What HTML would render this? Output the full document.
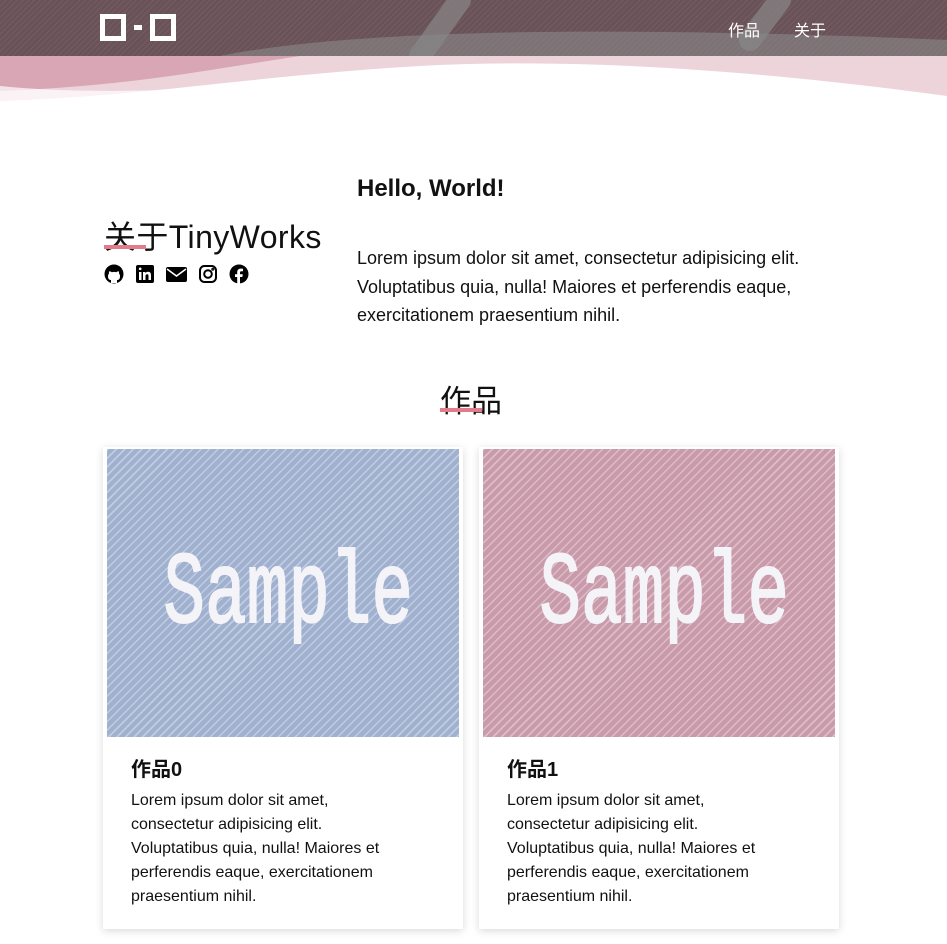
<!DOCTYPE html>
<html><head><meta charset="utf-8">
<style>
*{margin:0;padding:0;box-sizing:border-box}
body{width:947px;height:944px;overflow:hidden;background:#fff;font-family:"Liberation Sans","Noto Sans CJK SC",sans-serif;color:#111;position:relative}
.hdr{position:absolute;left:0;top:0;width:947px;height:56px;background:#6a5259;
background-image:repeating-linear-gradient(135deg,rgba(255,255,255,.06) 0 1px,transparent 1px 4px);}
.wave{position:absolute;left:0;top:56px;width:947px;height:60px}
.logo{position:absolute;left:100px;top:14px;display:flex;align-items:center;gap:4px}
.box{width:26px;height:27px;border:5px solid #fff}
.dash{width:8px;height:5px;background:#fff;margin:0 4px}
.nav{position:absolute;top:17px;color:#fff;font-size:16px}
.h2{position:absolute;left:357px;top:175px;font-size:24px;font-weight:bold}
.about{position:absolute;left:104px;top:212px;font-size:32px;letter-spacing:.4px}
.ul{position:absolute;height:4px;background:#e27c8a}
.p1{position:absolute;left:357px;top:244px;width:500px;font-size:18px;line-height:28.5px}
.icons{position:absolute;left:104px;top:264px;display:flex;gap:11px}
.works{position:absolute;left:440px;top:376px;font-size:31px}
.card{position:absolute;top:447px;width:360px;height:482px;background:#fff;box-shadow:0 2px 8px rgba(0,0,0,.15)}
.img{position:absolute;left:4px;top:2px;width:352px;height:288px;overflow:hidden;
background-image:repeating-linear-gradient(135deg,rgba(255,255,255,.35) 0 1.5px,transparent 1.5px 6px)}
.img span{position:absolute;left:0;width:352px;top:88px;text-align:center;color:#f4f4f8;font-family:"Liberation Mono",monospace;font-size:102px;transform:scaleX(.68);-webkit-text-stroke:2px #f4f4f8}
.card h3{position:absolute;left:28px;top:306px;font-size:20px}
.card p{position:absolute;left:28px;top:342px;width:285px;font-size:16px;line-height:24px}
</style></head><body>
<div class="hdr"></div>
<svg class="wave" viewBox="0 0 947 60" preserveAspectRatio="none">
<path d="M0 0H947V40C800 20 600 0 420 10 250 20 150 40 0 45Z" fill="#e6c2cc" opacity=".7"/>
<path d="M0 0H300C200 15 130 30 0 35Z" fill="#d29aab" opacity=".8"/>
<path d="M0 30C150 45 300 20 480 25 650 30 800 50 947 45V60H0Z" fill="#fff" opacity=".7"/>
</svg>
<svg style="position:absolute;left:0;top:0" width="947" height="56"><path d="M220 56C350 30 600 25 947 40V56Z" fill="#8a8a8a" opacity=".6"/><path d="M420 56L460 0M750 40L780 0" stroke="#888" stroke-width="22" stroke-linecap="round" opacity=".7"/></svg>
<div class="logo"><div class="box"></div><div class="dash"></div><div class="box"></div></div>
<div class="nav" style="left:728px">作品</div>
<div class="nav" style="left:794px">关于</div>
<div class="h2">Hello, World!</div>
<div class="about">关于TinyWorks</div>
<div class="ul" style="left:104px;top:245px;width:42px"></div>
<div class="icons">
<svg width="20" height="20" viewBox="0 0 20 20"><circle cx="10" cy="10" r="9.5"/><path d="M7 19v-3c-2 0-3-1-3-4 0-1 .5-2 1-2.5-.2-.7 0-1.8.3-2.3 1 0 2 .6 2.5 1a7 7 0 014.4 0c.5-.4 1.5-1 2.5-1 .3.5.5 1.6.3 2.3.5.5 1 1.5 1 2.5 0 3-1 4-3 4v3z" fill="#fff"/></svg>
<svg width="20" height="20" viewBox="0 0 20 20"><rect x="1" y="1" width="18" height="18" rx="2"/><path d="M4 8h2.5v8H4zM5.2 3.5a1.3 1.3 0 110 2.6 1.3 1.3 0 010-2.6zM8 8h2.4v1.2c.5-.8 1.4-1.4 2.6-1.4 2.3 0 3 1.4 3 3.6V16h-2.5v-4c0-1-.2-1.8-1.3-1.8S10.5 11 10.5 12v4H8z" fill="#fff"/></svg>
<svg width="21" height="20" viewBox="0 0 21 20"><rect x="0" y="3" width="21" height="15" rx="2"/><path d="M1 5l9.5 7L20 5" stroke="#fff" stroke-width="1.6" fill="none"/></svg>
<svg width="20" height="20" viewBox="0 0 20 20" fill="none" stroke="#000" stroke-width="2"><rect x="2" y="2" width="16" height="16" rx="4.5"/><circle cx="10" cy="10" r="3.8"/><circle cx="14.8" cy="5.2" r=".5" fill="#000"/></svg>
<svg width="20" height="20" viewBox="0 0 20 20"><circle cx="10" cy="10" r="9.5"/><path d="M11 20v-7h2.4l.4-2.8H11V8.5c0-.8.3-1.3 1.4-1.3H14V4.7c-.3 0-1.2-.1-2.2-.1-2.2 0-3.6 1.3-3.6 3.7v2H6V13h2.2v7z" fill="#fff"/></svg>
</div>
<div class="p1">Lorem ipsum dolor sit amet, consectetur adipisicing elit. Voluptatibus quia, nulla! Maiores et perferendis eaque, exercitationem praesentium nihil.</div>
<div class="works">作品</div>
<div class="ul" style="left:440px;top:408px;width:42px"></div>
<div class="card" style="left:103px"><div class="img" style="background-color:#a0b0cf"><span>Sample</span></div><h3>作品0</h3><p>Lorem ipsum dolor sit amet,<br>consectetur adipisicing elit.<br>Voluptatibus quia, nulla! Maiores et<br>perferendis eaque, exercitationem<br>praesentium nihil.</p></div>
<div class="card" style="left:479px"><div class="img" style="background-color:#c99aaa"><span>Sample</span></div><h3>作品1</h3><p>Lorem ipsum dolor sit amet,<br>consectetur adipisicing elit.<br>Voluptatibus quia, nulla! Maiores et<br>perferendis eaque, exercitationem<br>praesentium nihil.</p></div>
</body></html>
